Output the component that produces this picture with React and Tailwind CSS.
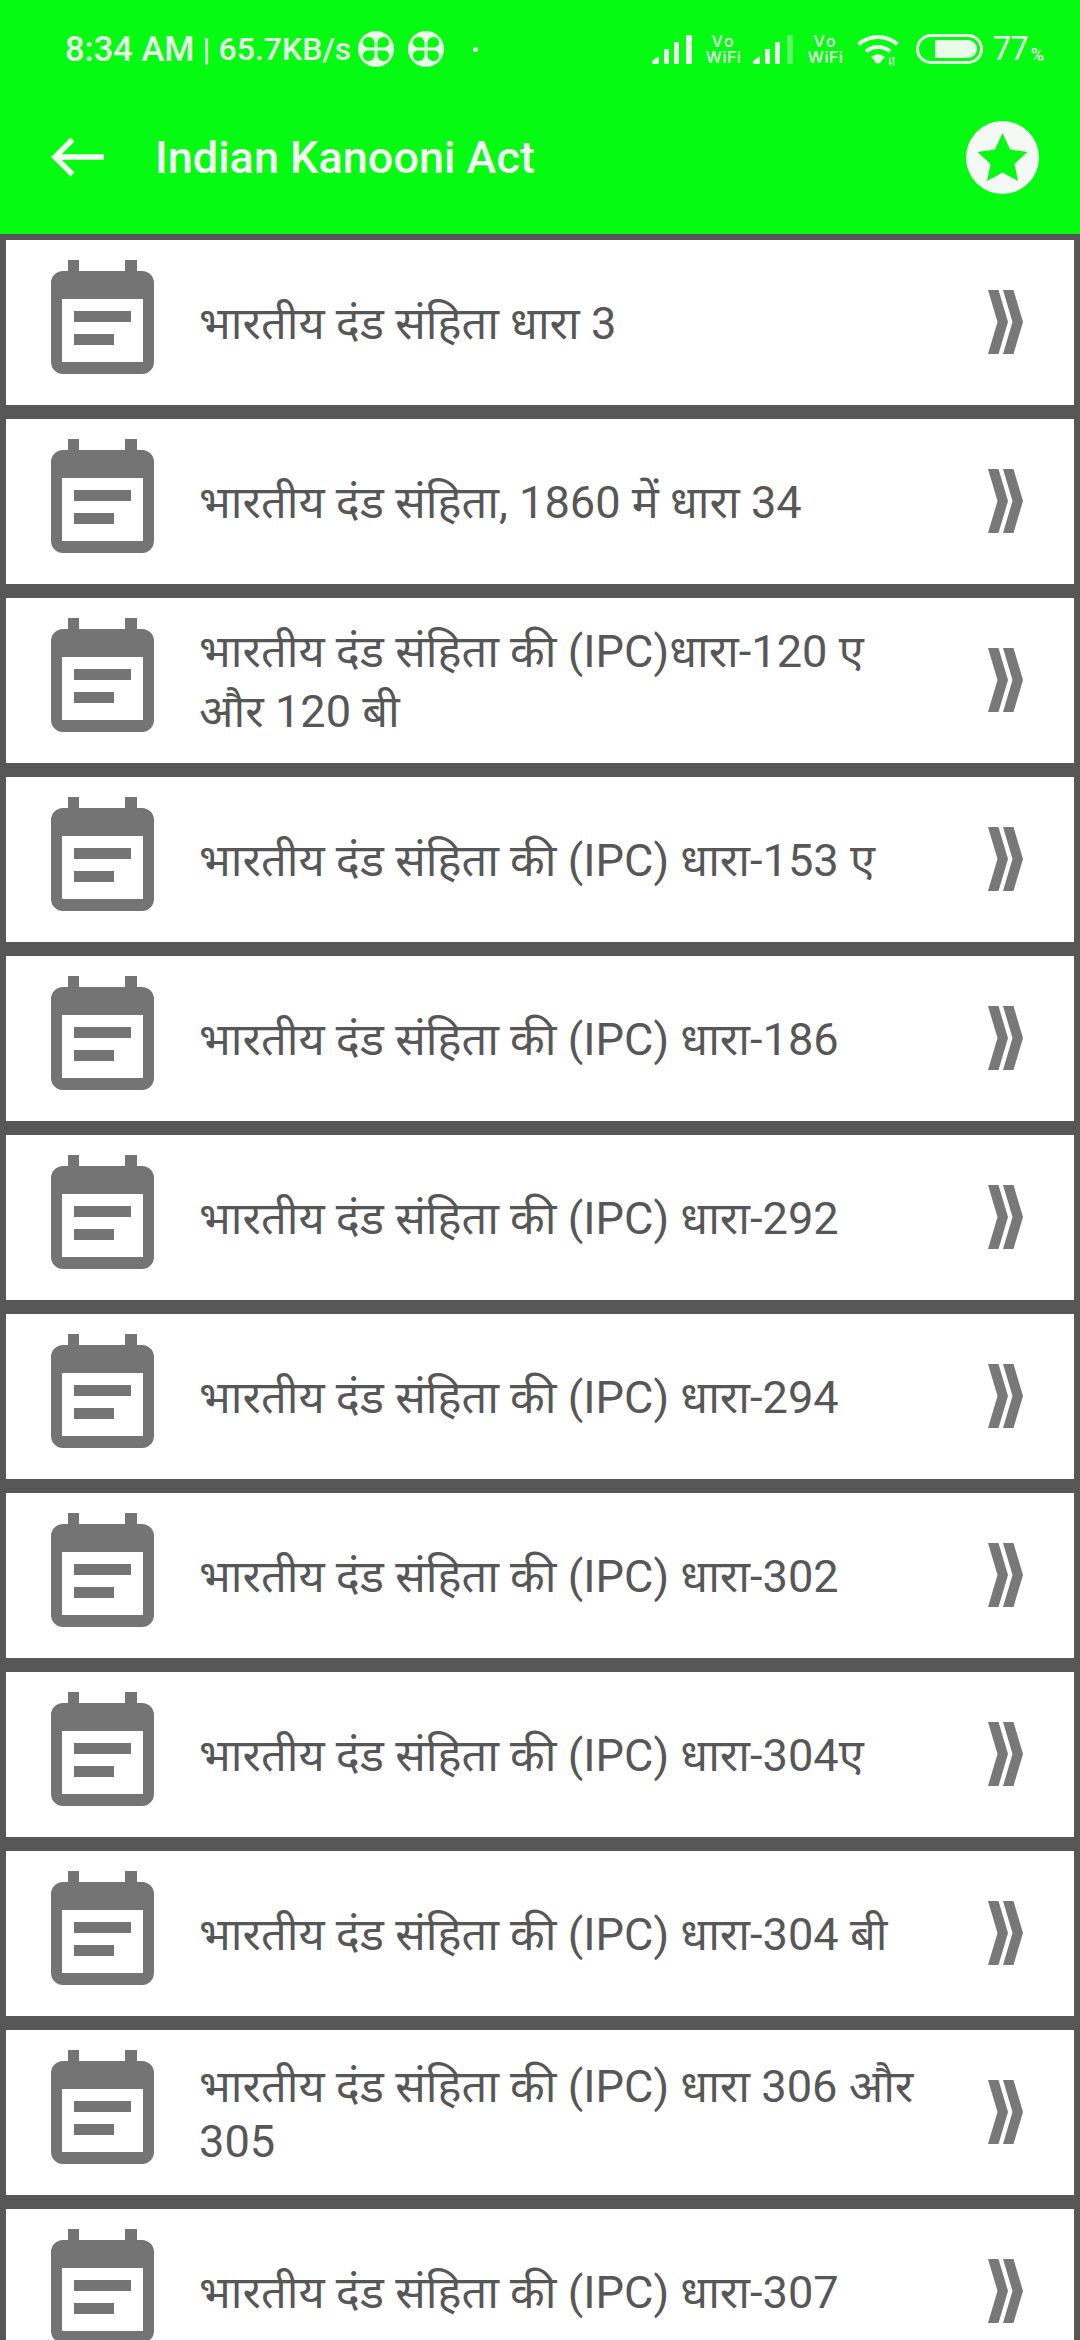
const rows = [
  { t: "भारतीय दंड संहिता धारा 3", lh: "leading-[55px]" },
  { t: "भारतीय दंड संहिता, 1860 में धारा 34", lh: "leading-[55px]" },
  { t: "भारतीय दंड संहिता की (IPC)धारा-120 ए और 120 बी", lh: "leading-[60px]" },
  { t: "भारतीय दंड संहिता की (IPC) धारा-153 ए", lh: "leading-[55px]" },
  { t: "भारतीय दंड संहिता की (IPC) धारा-186", lh: "leading-[55px]" },
  { t: "भारतीय दंड संहिता की (IPC) धारा-292", lh: "leading-[55px]" },
  { t: "भारतीय दंड संहिता की (IPC) धारा-294", lh: "leading-[55px]" },
  { t: "भारतीय दंड संहिता की (IPC) धारा-302", lh: "leading-[55px]" },
  { t: "भारतीय दंड संहिता की (IPC) धारा-304ए", lh: "leading-[55px]" },
  { t: "भारतीय दंड संहिता की (IPC) धारा-304 बी", lh: "leading-[55px]" },
  { t: "भारतीय दंड संहिता की (IPC) धारा 306 और 305", lh: "leading-[55px]" },
  { t: "भारतीय दंड संहिता की (IPC) धारा-307", lh: "leading-[55px]" },
];

function NoteIcon() {
  return (
    <svg width="103" height="114" viewBox="0 0 103 114" className="shrink-0">
      <path fill="#747474" fillRule="evenodd" d="M17 0h11v11h46V0h12v11h5a12 12 0 0 1 12 12v79a12 12 0 0 1-12 12H12a12 12 0 0 1-12-12V23a12 12 0 0 1 12-12h5ZM11 39v63h81V39ZM23 51h57v11H23ZM23 74h40v11H23Z" />
    </svg>
  );
}

function Chevrons() {
  return (
    <svg width="36" height="64" viewBox="0 0 36 64" className="shrink-0">
      <path fill="#787878" d="M0 0h10.500l9.500 32-9.500 32H0l9.500-32ZM15 0h10.500l9.500 32-9.500 32H15l9.500-32Z" />
    </svg>
  );
}

function Signal({ dim }) {
  const far = dim ? "#5cfb66" : "#eafdea";
  return (
    <svg width="40" height="29" viewBox="0 0 40 29" className="shrink-0">
      <path fill="#eafdea" d="M0 29v-3l7-5v8ZM12 29V14h5v15ZM22 29V7h5v22Z" />
      <path fill={far} d="M34 29V0h6v29Z" />
    </svg>
  );
}

function VoWifi() {
  return (
    <div className="flex flex-col items-center w-[36px] shrink-0 text-[16px] leading-[16px] font-medium text-[#eafdea] font-['Inter',sans-serif]">
      <span className="text-[16px] tracking-[2px]">Vo</span>
      <span className="tracking-[0.500px]">WiFi</span>
    </div>
  );
}

function Clover() {
  return (
    <svg width="36" height="36" viewBox="0 0 36 36" className="shrink-0">
      <circle cx="18" cy="18" r="18" fill="#e8fde8" />
      <g fill="#05fb12">
        <path d="M16.500 16.500H10a5 5 0 0 1-5-5 5.500 5.500 0 0 1 5.500-5.500 6 6 0 0 1 6 6Z" />
        <path d="M19.500 16.500H26a5 5 0 0 0 5-5 5.500 5.500 0 0 0-5.500-5.500 6 6 0 0 0-6 6Z" />
        <path d="M16.500 19.500H10a5 5 0 0 0-5 5 5.500 5.500 0 0 0 5.500 5.500 6 6 0 0 0 6-6Z" />
        <path d="M19.500 19.500H26a5 5 0 0 1 5 5 5.500 5.500 0 0 1-5.500 5.500 6 6 0 0 1-6-6Z" />
      </g>
    </svg>
  );
}

export default function App() {
  return (
    <div className="w-[1080px] h-[2340px] overflow-hidden bg-[#575757] font-['Roboto','Noto_Sans_Devanagari','Noto_Sans',sans-serif]">
      <header className="bg-[#05fb12] h-[234px] flex flex-col">
        <div className="h-[98px] pl-[65px] pr-[36px] flex items-center text-[#e8fde8]">
          <span className="text-[34.500px] font-medium leading-none whitespace-nowrap">8:34 AM</span>
          <span className="text-[32px] font-medium leading-none ml-[8px]">|</span>
          <span className="text-[32px] font-medium leading-none ml-[8px] whitespace-nowrap">65.7KB/s</span>
          <div className="ml-[7px]"><Clover /></div>
          <div className="ml-[14px]"><Clover /></div>
          <div className="ml-[29px] w-[5px] h-[5px] rounded-full bg-[#eafdea]" />
          <div className="ml-auto flex items-center">
            <Signal />
            <div className="ml-[14px]"><VoWifi /></div>
            <div className="ml-[11px]"><Signal dim /></div>
            <div className="ml-[15px]"><VoWifi /></div>
            <svg width="42" height="33" viewBox="0 0 42 33" className="ml-[13px] shrink-0">
              <g fill="none" stroke="#eafdea" strokeWidth="4">
                <path d="M1.500 11.500a29 29 0 0 1 39 0" />
                <path d="M9 18.500a18 18 0 0 1 24 0" />
              </g>
              <path fill="#eafdea" d="M14 24a10.500 10.500 0 0 1 14 0l-3 3h-8Z" />
              <circle cx="21" cy="27" r="3.500" fill="#eafdea" />
              <path fill="#eafdea" d="M36.500 23l-2 3h1.200v7h1.600v-7h1.200ZM33 33l-2-3h1.200v-6h1.600v6h1.200Z" opacity="0.8" />
            </svg>
            <div className="ml-[17px] w-[67px] h-[30px] shrink-0 rounded-full border-[3px] border-[#e8fde8] pt-[3px] pb-[3px] pr-[3px] pl-[16px] flex">
              <div className="flex-1 bg-[#e8fde8] rounded-r-full" />
            </div>
            <div className="ml-[10px] flex items-end text-[#e8fde8]">
              <span className="text-[33px] leading-[32px] tracking-[-1px]">77</span>
              <span className="ml-[3px] text-[18px] leading-[20px] font-medium">%</span>
            </div>
          </div>
        </div>
        <div className="flex-1 pl-[50px] pr-[41px] pb-[18px] flex items-center">
          <svg width="54" height="40" viewBox="0 0 54 40" className="shrink-0">
            <path d="M54 20H5M22.500 2.500 5 20l17.500 17.500" fill="none" stroke="#f5fff5" strokeWidth="5.500" />
          </svg>
          <span className="ml-[51px] text-[45px] font-medium leading-none text-[#f5fff5] whitespace-nowrap">Indian Kanooni Act</span>
          <div className="ml-auto w-[73px] h-[73px] rounded-full bg-[#f5f9f6] flex items-center justify-center">
            <svg width="51" height="48" viewBox="0 0 50 48">
              <path fill="#05fb12" d="m25 0 7.500 16.500L50 19 37 31l3.500 17L25 39.500 9.500 48 13 31 0 19l17.500-2.500Z" />
            </svg>
          </div>
        </div>
      </header>
      <main className="pt-[6px] px-[6px] flex flex-col gap-[14px]">
        {rows.map((r, i) => (
          <div key={i} className="bg-white h-[165px] shrink-0 flex items-start">
            <div className="ml-[45px] mt-[20px]"><NoteIcon /></div>
            <div className={`ml-[45px] w-[716px] h-full pt-[2px] flex items-center text-[45.200px] text-[#575757] ${r.lh}`}>
              <span>{r.t}</span>
            </div>
            <div className="ml-[73px] mt-[50px]"><Chevrons /></div>
          </div>
        ))}
      </main>
    </div>
  );
}
